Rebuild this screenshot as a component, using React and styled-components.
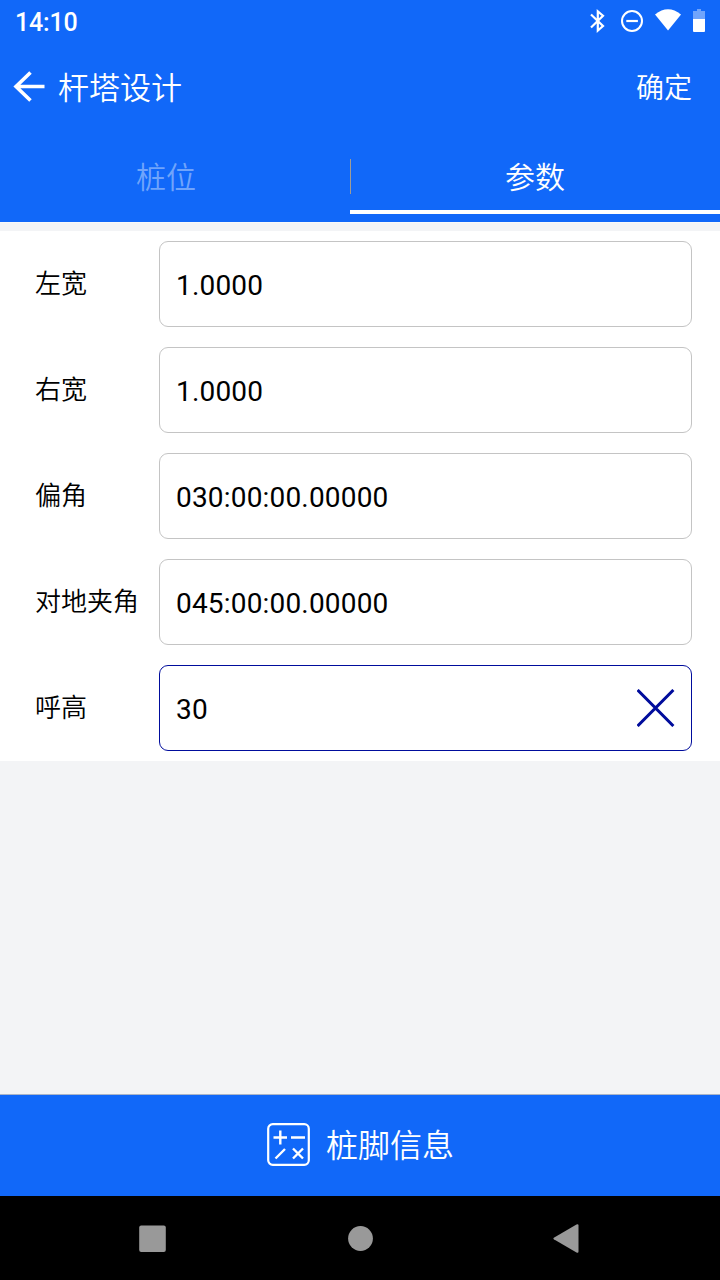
import React, { useState } from "react";
import styled, { createGlobalStyle } from "styled-components";

const GlobalStyle = createGlobalStyle`
    * {
        box-sizing: border-box;
    }
    body {
        margin: 0;
        font-family: Roboto, "Noto Sans CJK SC", sans-serif;
        font-weight: 350;
    }
    button,
    input {
        font-family: inherit;
        font-weight: inherit;
        border: none;
        background: none;
        padding: 0;
        margin: 0;
        outline: none;
    }
    svg {
        display: block;
        flex-shrink: 0;
    }
`;

const Screen = styled.div`
    width: 720px;
    height: 1280px;
    display: flex;
    flex-direction: column;
    background-color: #f3f4f6;
    overflow: hidden;
`;

const Header = styled.header`
    height: 223px;
    background-color: #1168f9;
    border-bottom: 1px solid #f8f9fa;
    color: #fff;
`;

const StatusBar = styled.div`
    height: 42px;
    display: flex;
    align-items: center;
    justify-content: space-between;
    padding: 0 13px 0 15px;
`;

const Clock = styled.span`
    font-size: 25px;
    font-weight: 500;
    line-height: 40px;
    letter-spacing: -0.2px;
    padding-top: 4px;
`;

const StatusIcons = styled.div`
    display: flex;
    height: 42px;
`;

const TitleBar = styled.div`
    height: 90px;
    display: flex;
    align-items: center;
    padding: 0 28px 0 13px;
`;

const Title = styled.h1`
    flex: 1;
    margin: 0 0 0 13px;
    padding-top: 4px;
    font-size: 31px;
    font-weight: 350;
    line-height: 46px;
`;

const Confirm = styled.button`
    padding-top: 3px;
    color: #fff;
    font-size: 28px;
    line-height: 42px;
`;

const Tabs = styled.nav`
    height: 90px;
    display: flex;
`;

const Tab = styled.button`
    width: ${(props) => props.$width}px;
    height: 82px;
    padding-top: 14px;
    padding-right: ${(props) => (props.$active ? 0 : 18)}px;
    border-bottom: 4px solid ${(props) => (props.$active ? "#fff" : "transparent")};
    color: ${(props) => (props.$active ? "#fff" : "#70a4fb")};
    font-size: 30px;
    line-height: 44px;
`;

const Divider = styled.div`
    width: 1px;
    height: 35px;
    margin: 27px -1px 0 0;
    background-color: #a09c95;
`;

const Form = styled.main`
    margin-top: 8px;
    padding: 10px 28px 10px 35px;
    display: flex;
    flex-direction: column;
    gap: 20px;
    background-color: #fff;
`;

const Row = styled.div`
    display: flex;
    height: 86px;
`;

const Label = styled.label`
    width: 124px;
    font-size: 26px;
    line-height: 86px;
    color: #000;
    white-space: nowrap;
`;

const Field = styled.div`
    flex: 1;
    display: flex;
    align-items: center;
    padding: 0 16px;
    border: 1px solid ${(props) => (props.$focused ? "#000c9c" : "#c4c4c4")};
    border-radius: 9px;
`;

const Input = styled.input`
    flex: 1;
    min-width: 0;
    height: 60px;
    padding-top: 2px;
    font-size: 28px;
    font-weight: 400;
    letter-spacing: 0.18px;
    color: #000;
`;

const BottomBar = styled.button`
    height: 102px;
    margin-top: auto;
    display: flex;
    align-items: center;
    justify-content: center;
    gap: 16px;
    padding: 0 0 2px 1px;
    border-top: 1px solid #a9b4c8;
    background-color: #1168f9;
    color: #fff;
    font-size: 32px;
    line-height: 46px;
`;

const BottomLabel = styled.span`
    padding-top: 3px;
`;

const NavBar = styled.footer`
    height: 84px;
    display: flex;
    align-items: center;
    justify-content: space-between;
    padding: 1px 141px 0 138px;
    background-color: #000;
`;

const rows = [
    { id: "left", label: "左宽", value: "1.0000" },
    { id: "right", label: "右宽", value: "1.0000" },
    { id: "deflection", label: "偏角", value: "030:00:00.00000" },
    { id: "ground", label: "对地夹角", value: "045:00:00.00000" },
    { id: "height", label: "呼高", value: "30" },
];

const StatusGlyphs = () => (
    <svg width="120" height="42" viewBox="587 0 120 42" fill="none">
        <path
            d="M591 14.500l12 11.500-5.200 4.500V11.300l5.200 4.400L591 27.500"
            stroke="#fff"
            strokeWidth="2.200"
        />
        <circle cx="632" cy="21" r="10" stroke="#fff" strokeWidth="2" />
        <path d="M626.300 21h11.600" stroke="#fff" strokeWidth="2.200" />
        <path d="M655 14.500Q668 4 681 14.500L668 30.500z" fill="#fff" />
        <path d="M697 9h4v2h4v8h-12v-8h4z" fill="#70a4fb" />
        <path d="M693 19h12v12a1 1 0 0 1-1 1h-10a1 1 0 0 1-1-1z" fill="#fff" />
    </svg>
);

const BackArrow = () => (
    <svg width="32" height="32" viewBox="0 0 32 32" fill="none">
        <path d="M17.500 1.500L3 15.500l14.500 14M3 15.500h28.500" stroke="#fff" strokeWidth="3.600" />
    </svg>
);

const ClearIcon = () => (
    <svg width="38" height="38" viewBox="0 0 38 38" fill="none">
        <path d="M.6 1l35.800 36M36.400 1L.6 37" stroke="#000c9c" strokeWidth="3" />
    </svg>
);

const CalcIcon = () => (
    <svg width="43" height="43" viewBox="0 0 43 43" fill="none" stroke="#fff">
        <rect x="1.200" y="1.200" width="40.600" height="40.600" rx="4.500" strokeWidth="2.200" />
        <path
            d="M6.500 14.500h13.500M13.300 7.500v14M24 14.500h14M8.500 35.500l9.500-9.500M26 25.500l10 10M36 25.500l-10 10"
            strokeWidth="2.400"
        />
    </svg>
);

const App = () => {
    const [values, setValues] = useState(rows.map((row) => row.value));
    const [focused, setFocused] = useState(4);

    const change = (index, value) =>
        setValues(values.map((old, i) => (i === index ? value : old)));

    return (
        <Screen>
            <GlobalStyle />
            <Header>
                <StatusBar>
                    <Clock>14:10</Clock>
                    <StatusIcons>
                        <StatusGlyphs />
                    </StatusIcons>
                </StatusBar>
                <TitleBar>
                    <BackArrow />
                    <Title>杆塔设计</Title>
                    <Confirm>确定</Confirm>
                </TitleBar>
                <Tabs>
                    <Tab $width={350}>桩位</Tab>
                    <Divider />
                    <Tab $width={370} $active>
                        参数
                    </Tab>
                </Tabs>
            </Header>
            <Form>
                {rows.map((row, index) => (
                    <Row key={row.id}>
                        <Label htmlFor={row.id}>{row.label}</Label>
                        <Field $focused={focused === index}>
                            <Input
                                id={row.id}
                                value={values[index]}
                                onFocus={() => setFocused(index)}
                                onChange={(e) => change(index, e.target.value)}
                            />
                            {focused === index && (
                                <button onClick={() => change(index, "")}>
                                    <ClearIcon />
                                </button>
                            )}
                        </Field>
                    </Row>
                ))}
            </Form>
            <BottomBar>
                <CalcIcon />
                <BottomLabel>桩脚信息</BottomLabel>
            </BottomBar>
            <NavBar>
                <svg width="28" height="28" viewBox="0 0 28 28" fill="#999">
                    <rect x="1.200" y=".4" width="26.600" height="26.600" rx="2" />
                </svg>
                <svg width="26" height="26" viewBox="0 0 26 26" fill="#999">
                    <circle cx="13.500" cy="12.500" r="12.400" />
                </svg>
                <svg width="26" height="30" viewBox="0 0 26 30" fill="#999">
                    <path d="M.8 13.700L23.500 .5q2-1 2 1v26q0 2-2 1L.8 15.300q-.8-.8 0-1.600z" />
                </svg>
            </NavBar>
        </Screen>
    );
};

export default App;
